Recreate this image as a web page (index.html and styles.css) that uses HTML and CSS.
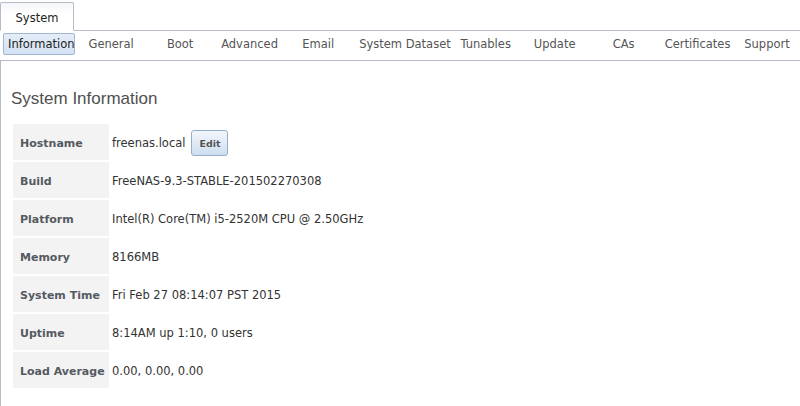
FILE: index.html
```html
<!DOCTYPE html>
<html>
<head>
<meta charset="utf-8">
<link rel="stylesheet" href="styles.css">
</head>
<body>
<div class="tabbar">
  <div class="main-tab">System</div>
</div>
<div class="subnav">
  <div class="subtab active">Information</div>
  <div class="subtab">General</div>
  <div class="subtab">Boot</div>
  <div class="subtab">Advanced</div>
  <div class="subtab">Email</div>
  <div class="subtab">System Dataset</div>
  <div class="subtab">Tunables</div>
  <div class="subtab">Update</div>
  <div class="subtab">CAs</div>
  <div class="subtab">Certificates</div>
  <div class="subtab">Support</div>
</div>
<div class="panel">
  <h2 class="title">System Information</h2>
  <table class="info">
    <tr><th>Hostname</th><td><span class="host">freenas.local</span><button class="edit">Edit</button></td></tr>
    <tr><th>Build</th><td>FreeNAS-9.3-STABLE-201502270308</td></tr>
    <tr><th>Platform</th><td>Intel(R) Core(TM) i5-2520M CPU @ 2.50GHz</td></tr>
    <tr><th>Memory</th><td>8166MB</td></tr>
    <tr><th>System Time</th><td>Fri Feb 27 08:14:07 PST 2015</td></tr>
    <tr><th>Uptime</th><td>8:14AM up 1:10, 0 users</td></tr>
    <tr><th>Load Average</th><td>0.00, 0.00, 0.00</td></tr>
  </table>
</div>
</body>
</html>
```
FILE: styles.css
```css
html, body {
  margin: 0;
  padding: 0;
  background: #fff;
  font-family: "DejaVu Sans", Verdana, sans-serif;
  font-size: 11.5px;
  color: #333;
}
.tabbar {
  display: flex;
  align-items: flex-end;
  height: 28px;
  padding-top: 2px;
  border-bottom: 1px solid #b5bcc8;
}
.main-tab {
  position: relative;
  box-sizing: border-box;
  width: 74px;
  height: 29px;
  margin-bottom: -1px;
  border: 1px solid #b5bcc8;
  border-bottom: 1px solid #fff;
  border-radius: 2px 2px 0 0;
  background: linear-gradient(#f4f6f9, #fff 40%);
  color: #222;
  text-align: center;
  line-height: 31px;
}
.subnav {
  display: flex;
  gap: 3px;
  height: 22px;
  padding: 2px 0 5px 3px;
  border-bottom: 1px solid #b5bcc8;
}
.subtab {
  box-sizing: border-box;
  min-width: 66px;
  height: 22px;
  padding: 0 4px;
  border: 1px solid transparent;
  border-radius: 2px;
  color: #555;
  text-align: center;
  line-height: 21px;
  white-space: nowrap;
}
.subtab.active {
  background: linear-gradient(#e4edf8, #d3e1f2);
  border-color: #a0b6d2;
  color: #222;
}
.panel {
  border-left: 1px solid #b5bcc8;
  padding: 28px 0 0 10px;
  height: 317px;
}
.title {
  margin: 0 0 13px 0;
  font-family: "Liberation Sans", Arial, sans-serif;
  font-size: 17px;
  font-weight: normal;
  line-height: 20px;
  color: #505050;
}
.info {
  border-collapse: separate;
  border-spacing: 2px;
}
.info th {
  box-sizing: border-box;
  width: 96px;
  height: 36px;
  padding: 2px 0 0 7px;
  background: #f3f3f3;
  text-align: left;
  font-size: 11px;
  font-weight: bold;
  color: #555a61;
  white-space: nowrap;
}
.info td {
  padding: 2px 0 0 1px;
  color: #333;
  white-space: nowrap;
}
.host {
  vertical-align: middle;
}
.edit {
  box-sizing: border-box;
  width: 37px;
  height: 26px;
  margin-left: 6px;
  padding: 0;
  border: 1px solid #98adc8;
  border-radius: 3px;
  background: linear-gradient(#f3f7fc, #cddef1);
  font-family: "DejaVu Sans", Verdana, sans-serif;
  font-size: 9.5px;
  font-weight: bold;
  color: #555;
  vertical-align: middle;
}
```
